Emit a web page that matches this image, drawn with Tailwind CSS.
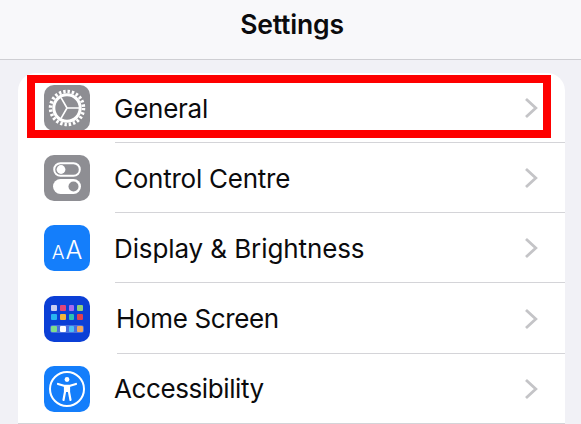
<!DOCTYPE html>
<html lang="en">
<head>
    <meta charset="UTF-8">
    <meta name="viewport" content="width=device-width, initial-scale=1.0">
    <title>Settings</title>
    <script src="https://cdn.jsdelivr.net/npm/@tailwindcss/browser@4"></script>
</head>
<body class="bg-[#f1f1f6] h-[424px] overflow-hidden font-['Inter',sans-serif] text-[#0b0b0d]">

    <!-- Nav bar -->
    <header class="h-[60px] bg-[#f8f8fa] border-b border-[#cfcfd3] flex items-center justify-center pb-[10px] pl-[3px]">
        <h1 class="text-[26.5px] font-semibold tracking-[-0.2px]">Settings</h1>
    </header>

    <!-- List -->
    <main class="relative ml-[18px] w-[547px] mt-[13px] bg-white rounded-t-[18px]">

        <div class="h-[69px] flex items-center pl-[26px] pr-[27px] pt-[1px]">
            <div class="w-[46px] h-[46px] rounded-[10px] bg-[#8e8e93] flex items-center justify-center shrink-0">
                <svg width="40" height="40" viewBox="0 0 40 40" fill="none" stroke="white">
                    <circle cx="20" cy="20" r="16.5" stroke-width="3.5" stroke-dasharray="2.4 1.92"></circle>
                    <circle cx="20" cy="20" r="13.2" stroke-width="3"></circle>
                    <path d="M20 20V8M20 20L9.6 26M20 20L30.4 26" stroke-width="1.6" transform="rotate(90 20 20)"></path>
                </svg>
            </div>
            <span class="ml-[24px] text-[26px] tracking-[-0.25px] flex-1">General</span>
            <svg width="14" height="22" viewBox="0 0 14 22" fill="none" stroke="#c4c4c7" stroke-width="2.8"><path d="M2 2l9.8 9L2 20"></path></svg>
        </div>

        <div class="h-[70px] flex items-center pl-[26px] pr-[27px] pt-[2px] relative">
            <div class="absolute left-[97px] right-0 top-0 border-t border-[#d4d4d8]"></div>
            <div class="w-[46px] h-[46px] rounded-[10px] bg-[#8e8e93] flex items-center justify-center shrink-0">
                <svg width="32" height="36" viewBox="0 0 32 36" fill="none">
                    <rect x="3.2" y="3.2" width="25.6" height="12.6" rx="6.3" stroke="white" stroke-width="2"></rect>
                    <circle cx="10" cy="9.5" r="4.4" fill="white"></circle>
                    <rect x="2" y="19" width="28" height="15" rx="7.5" fill="white"></rect>
                    <circle cx="22.5" cy="26.5" r="5" fill="#8e8e93"></circle>
                </svg>
            </div>
            <span class="ml-[24px] text-[26px] tracking-[-0.25px] flex-1">Control Centre</span>
            <svg width="14" height="22" viewBox="0 0 14 22" fill="none" stroke="#c4c4c7" stroke-width="2.8"><path d="M2 2l9.8 9L2 20"></path></svg>
        </div>

        <div class="h-[70px] flex items-center pl-[26px] pr-[27px] pt-[2px] relative">
            <div class="absolute left-[97px] right-0 top-0 border-t border-[#d4d4d8]"></div>
            <div class="w-[46px] h-[46px] rounded-[10px] bg-[#147efb] text-white flex items-baseline justify-center shrink-0 pt-[13px]">
                <span class="text-[19px] leading-none font-light">A</span><span class="text-[25px] leading-none font-light ml-[1px]">A</span>
            </div>
            <span class="ml-[24px] text-[26px] tracking-[-0.1px] flex-1">Display &amp; Brightness</span>
            <svg width="14" height="22" viewBox="0 0 14 22" fill="none" stroke="#c4c4c7" stroke-width="2.8"><path d="M2 2l9.8 9L2 20"></path></svg>
        </div>

        <div class="h-[71px] flex items-center pl-[26px] pr-[27px] pt-[2px] relative">
            <div class="absolute left-[97px] right-0 top-0 border-t border-[#d4d4d8]"></div>
            <div class="w-[46px] h-[46px] rounded-[10px] bg-[#0b3fd6] flex flex-col justify-center px-[7px] gap-[5px] shrink-0">
                <div class="grid grid-cols-4 gap-[3px]">
                    <div class="h-[6px] rounded-[1px] bg-[#c9cdf0]"></div>
                    <div class="h-[6px] rounded-[1px] bg-[#e0457a]"></div>
                    <div class="h-[6px] rounded-[1px] bg-[#a56bf0]"></div>
                    <div class="h-[6px] rounded-[1px] bg-[#8fd17a]"></div>
                    <div class="h-[6px] rounded-[1px] bg-[#28b4f0]"></div>
                    <div class="h-[6px] rounded-[1px] bg-[#f2b33a]"></div>
                    <div class="h-[6px] rounded-[1px] bg-[#2cc0b0]"></div>
                    <div class="h-[6px] rounded-[1px] bg-[#e23f4f]"></div>
                </div>
                <div class="grid grid-cols-4 gap-[3px] bg-white/25 rounded-[3px] p-[1px] -mx-[1px]">
                    <div class="h-[6px] rounded-[1px] bg-[#7fdc8a]"></div>
                    <div class="h-[6px] rounded-[1px] bg-white"></div>
                    <div class="h-[6px] rounded-[1px] bg-[#4cc0f5]"></div>
                    <div class="h-[6px] rounded-[1px] bg-[#f0a860]"></div>
                </div>
            </div>
            <span class="ml-[26px] text-[26px] tracking-[-0.35px] flex-1">Home Screen</span>
            <svg width="14" height="22" viewBox="0 0 14 22" fill="none" stroke="#c4c4c7" stroke-width="2.8"><path d="M2 2l9.8 9L2 20"></path></svg>
        </div>

        <div class="h-[71px] flex items-center pl-[26px] pr-[27px] pt-[1px] relative border-b border-[#d4d4d8]">
            <div class="absolute left-[99px] right-0 top-0 border-t border-[#d4d4d8]"></div>
            <div class="w-[46px] h-[46px] rounded-[10px] bg-[#147efb] flex items-center justify-center shrink-0">
                <svg width="40" height="40" viewBox="0 0 40 40" fill="none" stroke="white">
                    <circle cx="20" cy="20" r="17" stroke-width="2"></circle>
                    <circle cx="20" cy="10.5" r="2.4" fill="white" stroke="none"></circle>
                    <path d="M11 15L17 16.8H23L29 15" stroke-width="2.2" stroke-linecap="round" stroke-linejoin="round"></path>
                    <path d="M18 17V23L16.5 31M22 17V23L23.5 31" stroke-width="2.2" stroke-linecap="round"></path>
                    <path d="M18 17h4v6h-4z" fill="white" stroke="none"></path>
                </svg>
            </div>
            <span class="ml-[24px] text-[26px] tracking-[-0.4px] flex-1">Accessibility</span>
            <svg width="14" height="22" viewBox="0 0 14 22" fill="none" stroke="#c4c4c7" stroke-width="2.8"><path d="M2 2l9.8 9L2 20"></path></svg>
        </div>

        <!-- Red highlight drawn over the first row -->
        <div class="absolute left-[9px] top-[2px] w-[524px] h-[63px] border-[8px] border-[#fe0000]"></div>
    </main>

</body>
</html>
